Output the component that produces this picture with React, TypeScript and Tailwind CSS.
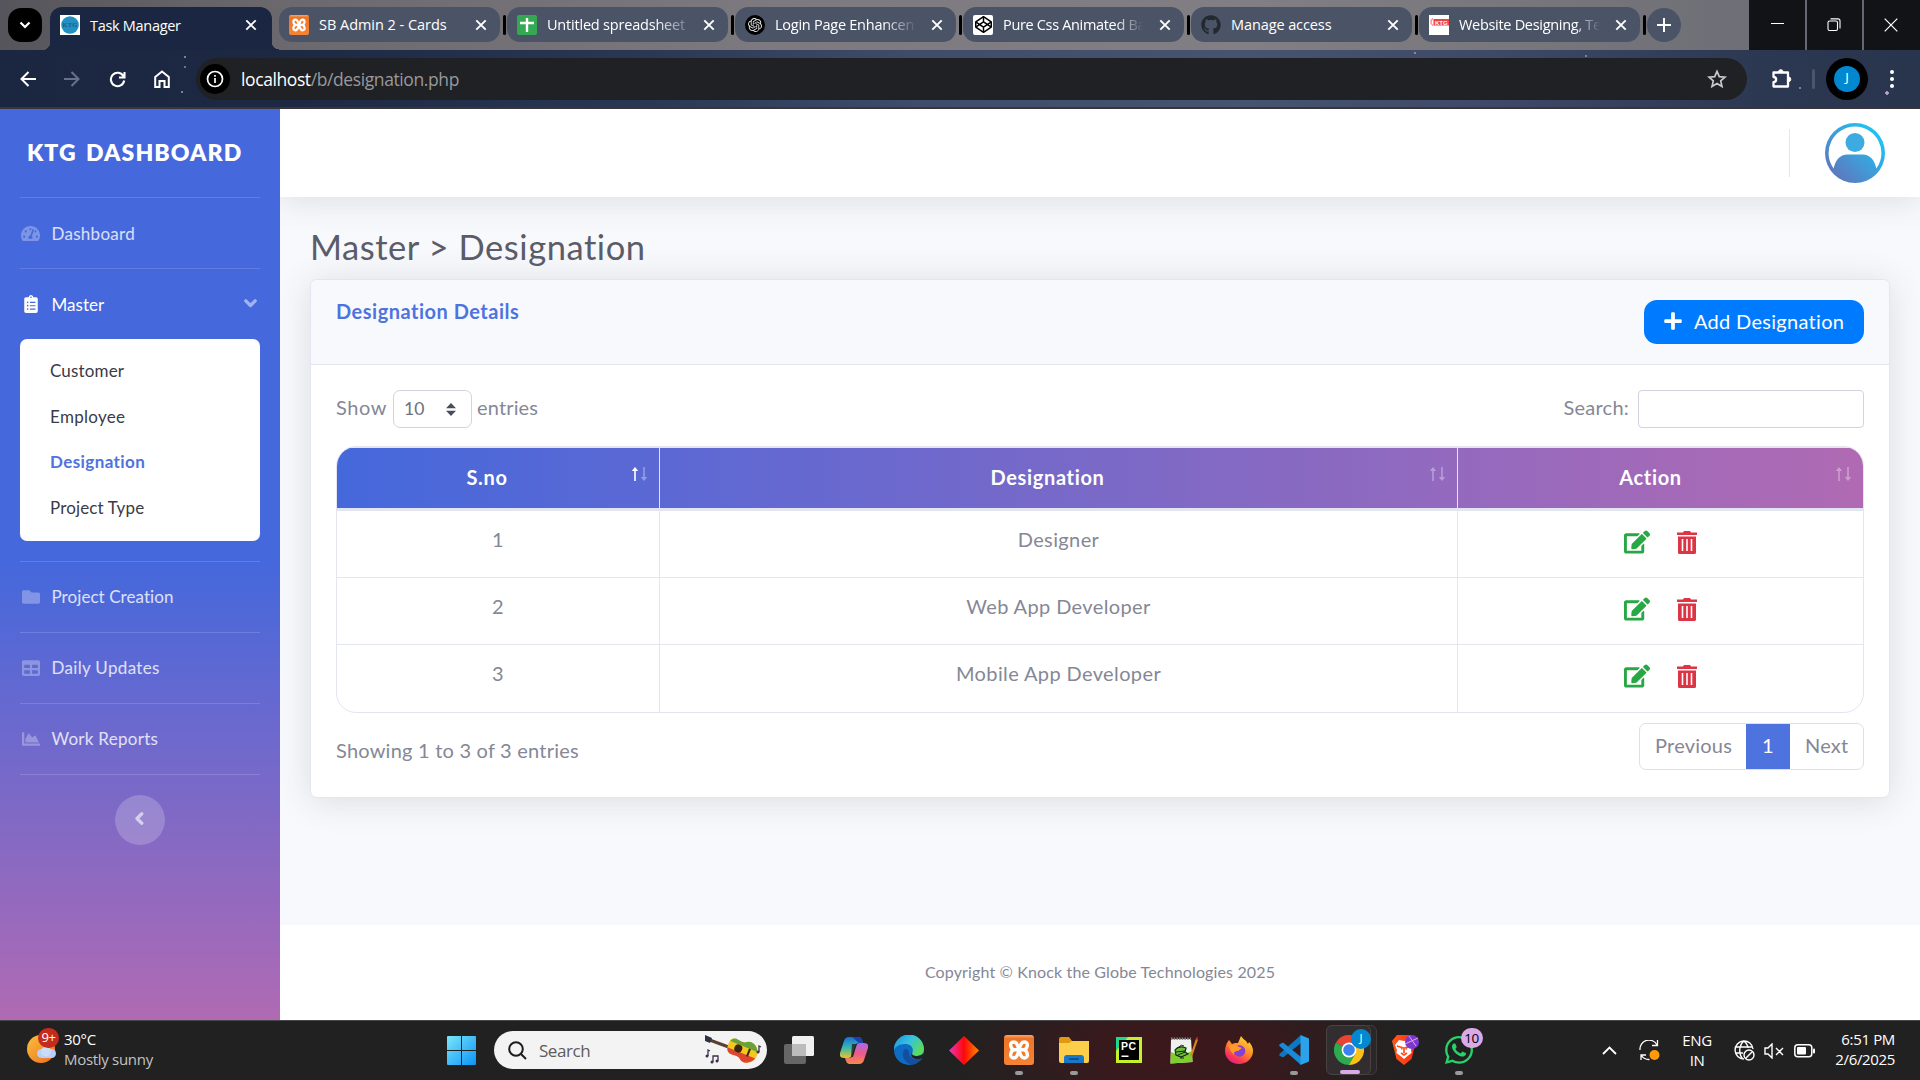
import React from "react";
import { FaTachometerAlt, FaClipboardList, FaFolder, FaTable, FaChartArea, FaPlus, FaEdit, FaWhatsapp, FaGithub, FaCodepen } from "react-icons/fa";
import { SiOpenai } from "react-icons/si";

const Close = ({ className = "" }: { className?: string }) => (
  <svg className={"shrink-0 " + className} width="12" height="12" viewBox="0 0 12 12" stroke="#fff" strokeWidth="1.9">
    <path d="M1.3 1.3 10.7 10.7M10.7 1.3 1.3 10.7" />
  </svg>
);

const Xampp = ({ size }: { size: number }) => (
  <svg className="shrink-0" width={size} height={size} viewBox="0 0 30 30">
    <defs><linearGradient id="xp" x1="0" y1="0" x2="0" y2="1"><stop stopColor="#f9a96c" /><stop offset=".12" stopColor="#ee7426" /><stop offset="1" stopColor="#f58434" /></linearGradient></defs>
    <rect width="30" height="30" rx="3" fill="url(#xp)" />
    <path d="M10 14.800H20M10.500 14.800C6.500 14.500 4.800 7 9.500 7 13 7 13.500 10 15 14.800 16.500 10 17 7 20.500 7c4.700 0 3 7.500-1 7.800 4 .3 5.700 8.200 1 8.200-3.500 0-4-3.200-5.500-8.200-1.500 5-2 8.200-5.500 8.200-4.700 0-3-7.900 1-8.200Z" fill="none" stroke="#fff" strokeWidth="3.400" strokeLinejoin="round" />
  </svg>
);

const favicons: Record<string, React.ReactNode> = {
  ktg: (
    <svg width="20" height="20" viewBox="0 0 20 20">
      <rect width="20" height="20" fill="#fff" />
      <circle cx="10" cy="10" r="8.8" fill="#2390c4" />
      <text x="10" y="12.4" fontSize="6.8" textAnchor="middle" fill="#1f5f80" fontFamily="Liberation Serif" fontWeight="700">KTG</text>
    </svg>
  ),
  xampp: <Xampp size={20} />,
  sheet: (
    <svg width="20" height="20" viewBox="0 0 20 20">
      <rect width="20" height="20" rx="2" fill="#34a853" />
      <path d="M10 3v14M3 8h14" stroke="#fff" strokeWidth="2.4" />
    </svg>
  ),
  openai: (
    <span className="flex h-5 w-5 items-center justify-center rounded-full bg-black"><SiOpenai size={14} color="#e8e8e8" /></span>
  ),
  codepen: (
    <span className="flex h-5 w-5 items-center justify-center rounded-[2px] bg-white"><FaCodepen size={17} color="#000" /></span>
  ),
  github: <FaGithub size={20} color="#24292f" />,
  web: (
    <svg width="20" height="20" viewBox="0 0 20 20">
      <rect width="20" height="20" fill="#fff" />
      <path d="M4 3.500a4 4 0 0 0 0 7" fill="none" stroke="#f99" strokeWidth="1.6" />
      <rect x="4.500" y="4" width="15.500" height="6.500" fill="#f04444" />
      <text x="12.300" y="9.500" fontSize="6" textAnchor="middle" fill="#fff" fontFamily="Liberation Sans" fontWeight="700">KTG</text>
    </svg>
  ),
};

const tabs = [
  { icon: "xampp", title: "SB Admin 2 - Cards", cls: "tracking-[-0.03px]" },
  { icon: "sheet", title: "Untitled spreadsheet", cls: "tracking-[-0.2px] [mask-image:linear-gradient(90deg,#000_108px,rgba(0,0,0,0.25)_139px)]" },
  { icon: "openai", title: "Login Page Enhancen", cls: "tracking-[-0.25px] [mask-image:linear-gradient(90deg,#000_108px,transparent_142px)]" },
  { icon: "codepen", title: "Pure Css Animated Ba", cls: "tracking-[-0.33px] [mask-image:linear-gradient(90deg,#000_112px,transparent_140px)]" },
  { icon: "github", title: "Manage access", cls: "tracking-[-0.1px]" },
  { icon: "web", title: "Website Designing, Te", cls: "tracking-[-0.3px] [mask-image:linear-gradient(90deg,#000_116px,transparent_141px)]" },
];

const TabStrip = () => (
  <div className="flex h-[50px] bg-[linear-gradient(90deg,#56555b_0%,#6c696e_15%,#7c7a7e_40%,#817f83_65%,#77767b_80%,#6d6e76_92%)]">
    <div className="ml-2 mt-2 flex h-[34px] w-[34px] items-center justify-center rounded-[13px] bg-black">
      <svg width="12" height="8" viewBox="0 0 12 8" fill="none" stroke="#fff" strokeWidth="2.2"><path d="M1.5 1.5 6 6l4.500-4.500" /></svg>
    </div>
    <div className="flex items-end">
      <div className="h-2 w-2 bg-[radial-gradient(circle_at_0_0,transparent_8px,#1b2740_8.500px)]" />
      <div className="flex h-[43px] w-[222px] items-center rounded-t-[12px] bg-[#1b2742] pb-[7px] pl-[10px] pr-[15px]">
        {favicons.ktg}
        <span className="ml-[10px] flex-1 whitespace-nowrap pt-px tracking-[-0.3px]">Task Manager</span>
        <Close />
      </div>
      <div className="h-2 w-[7px] bg-[radial-gradient(circle_at_100%_0,transparent_7px,#1b2740_7.500px)]" />
    </div>
    {tabs.map((t) => (
      <div key={t.title} className="flex w-[228px] shrink-0 pt-[7px]">
        <div className="flex h-[35px] w-[220.500px] items-center rounded-[13px] bg-[#4b5467] pl-[10px] pr-[13px]">
          <span className="flex h-5 w-5 shrink-0 items-center">{favicons[t.icon]}</span>
          <span className={"ml-[10px] w-[146px] whitespace-nowrap pt-px " + t.cls}>{t.title}</span>
          <Close className="ml-auto" />
        </div>
        <div className="ml-[3px] mt-2 h-5 w-[3px] rounded bg-black" />
      </div>
    ))}
    <div className="mt-2 flex h-[34px] w-[34px] items-center justify-center rounded-full bg-[#4b5467]">
      <svg width="14" height="14" stroke="#fff" strokeWidth="2"><path d="M7 0v14M0 7h14" /></svg>
    </div>
    <div className="ml-auto flex w-[171px] gap-[2px] bg-[#656773]">
      <div className="flex w-[56px] items-center justify-center bg-[#121316]"><div className="-mt-[3px] h-px w-[13px] bg-white" /></div>
      <div className="flex w-[55px] items-center justify-center bg-[#121316] pr-[2px]">
        <svg width="14" height="14" fill="none" stroke="#fff" strokeWidth="1.1"><rect x="1" y="3" width="9.500" height="9.500" rx="1.500" /><path d="M3.500 .9h7.500a2 2 0 0 1 2 2v7.500" /></svg>
      </div>
      <div className="flex flex-1 items-center justify-center bg-[#121316] pr-[2px]">
        <svg width="14" height="14" stroke="#fff" strokeWidth="1.200"><path d="M.7.7l12.600 12.600M13.300.7.7 13.300" /></svg>
      </div>
    </div>
  </div>
);

const Toolbar = () => (
  <div className="flex h-[59px] items-center border-b-2 border-[#3a3538] bg-[radial-gradient(circle_at_185px_7px,#78839b_1px,transparent_1.500px),radial-gradient(circle_at_185px_17px,#68738b_1px,transparent_1.500px),radial-gradient(circle_at_182px_42px,#78839b_1px,transparent_1.500px),radial-gradient(circle_at_1415px_3px,#98839b_1px,transparent_1.500px),radial-gradient(circle_at_1586px_6px,#78839b_1px,transparent_1.500px),radial-gradient(circle_at_1800px_38px,#78839b_1px,transparent_1.500px),radial-gradient(circle_at_1887px_43px,#b8a3cb_1.500px,transparent_2px),linear-gradient(90deg,#1b2740_0%,#1d2943_15%,#2a3753_33%,#3f4d6b_48%,#47546f_65%,#3d4967_78%,#2c3751_92%,#29344d_100%)] pt-px">
    <svg className="ml-5" width="16" height="16" fill="none" stroke="#fff" strokeWidth="2"><path d="M16 8H1.500M8.500 1 1.500 8l7 7" /></svg>
    <svg className="ml-[28px]" width="16" height="16" fill="none" stroke="#68718a" strokeWidth="2"><path d="M0 8h14.500M7.500 1l7 7-7 7" /></svg>
    <svg className="ml-[29px]" width="17" height="17" fill="none" stroke="#fff" strokeWidth="2.100"><path d="M14.500 5.300A6.700 6.700 0 1 0 15.200 9.500M15.500 1v5.500H10" /></svg>
    <svg className="ml-[28px]" width="16" height="18" fill="none" stroke="#fff" strokeWidth="2"><path d="M1.200 7 8 1.500 14.800 7v10H10.500v-6h-5v6H1.200Z" /></svg>
    <div className="ml-[26px] flex h-[42px] w-[1551px] shrink-0 items-center rounded-full bg-[#202124] pl-[4px] pr-[20px]">
      <div className="flex h-[30px] w-[30px] items-center justify-center rounded-full bg-black">
        <svg width="18" height="18" fill="none" stroke="#fff" strokeWidth="1.700"><circle cx="9" cy="9" r="7.500" /><path d="M9 8v5M9 5v1.800" /></svg>
      </div>
      <span className="ml-[11px] pt-px text-[17.500px] tracking-[-0.4px] text-white">localhost<span className="text-[#98999c]">/b/designation.php</span></span>
      <svg className="ml-auto" width="20" height="20" viewBox="0 0 20 20" fill="none" stroke="#c7c8ca" strokeWidth="1.700"><path d="m10 2.300 2.300 5.300 5.700.5-4.300 3.800 1.300 5.700-5-3-5 3 1.300-5.700L2 8.100l5.700-.5Z" /></svg>
    </div>
    <svg className="ml-[24px]" width="22" height="22" viewBox="0 0 22 22"><path d="M2.500 4.500h14.500v14H2.500v-4.300a2.600 2.600 0 0 0 0-5.200Z" fill="none" stroke="#fff" strokeWidth="2.300" strokeLinejoin="round" /><path d="M7.500 4a2.300 2.300 0 0 1 4.600 0M17.500 9a2.300 2.300 0 0 1 0 4.600" fill="#fff" stroke="#fff" /></svg>
    <div className="ml-[19px] h-5 w-[3px] rounded bg-[#4a5570]" />
    <div className="ml-[11px] flex h-[42px] w-[42px] items-center justify-center rounded-full bg-black">
      <div className="flex h-[26px] w-[26px] items-center justify-center rounded-full bg-[#0288d1] font-['Noto_Sans'] text-[13px] text-white"><span className="-mt-[3px]">J</span></div>
    </div>
    <svg className="ml-[21px]" width="6" height="20" fill="#fff"><circle cx="3" cy="3" r="2" /><circle cx="3" cy="10" r="2" /><circle cx="3" cy="17" r="2" /></svg>
  </div>
);

const Divider = () => <div className="mx-5 h-px shrink-0 bg-white/15" />;

const NavItem = ({ icon, label, active, cls = "" }: { icon: React.ReactNode; label: string; active?: boolean; cls?: string }) => (
  <div className={"flex h-[70px] items-center pl-5 pr-[23px] text-[17px] " + (active ? "text-white" : "text-white/80")}>
    <span className={"flex w-[21px] shrink-0 justify-center " + (active ? "" : "text-white/30")}>{icon}</span>
    <span className={"ml-[10.500px] flex-1 whitespace-nowrap " + cls}>{label}</span>
    {active && (
      <svg className="-mt-px opacity-50" width="13" height="9" fill="none" stroke="#fff" strokeWidth="3.300" strokeLinecap="round" strokeLinejoin="round"><path d="m1.800 1.800 4.700 4.700 4.700-4.700" /></svg>
    )}
  </div>
);

const Sidebar = () => (
  <aside className="relative z-20 flex w-[280px] flex-col bg-[linear-gradient(180deg,#4568dc_50%,#b06ab3_100%)]">
    <div className="flex h-[88px] items-center whitespace-nowrap pb-[2px] pl-[27px] text-[23px] font-extrabold tracking-[1.08px] text-white [word-spacing:3px]">KTG DASHBOARD</div>
    <Divider />
    <NavItem icon={<FaTachometerAlt size={19} />} label="Dashboard" cls="pt-px tracking-[0.28px]" />
    <Divider />
    <NavItem icon={<FaClipboardList size={18} />} label="Master" active cls="pt-px tracking-[0.05px]" />
    <div className="mx-5 flex h-[202px] shrink-0 flex-col rounded-[7px] bg-white pl-[30px] pt-[9px] text-[17px] text-[#3a3b45]">
      <div className="flex h-[45.500px] items-center tracking-[0.15px]">Customer</div>
      <div className="flex h-[45.500px] items-center tracking-[0.3px]">Employee</div>
      <div className="flex h-[45.500px] items-center font-bold tracking-[0.4px] text-[#4e73df]">Designation</div>
      <div className="flex h-[45.500px] items-center tracking-[0.15px]">Project Type</div>
    </div>
    <div className="h-5 shrink-0" />
    <Divider />
    <NavItem icon={<FaFolder size={18} />} label="Project Creation" cls="tracking-[0.07px]" />
    <Divider />
    <NavItem icon={<FaTable size={18} />} label="Daily Updates" cls="tracking-[0.32px]" />
    <Divider />
    <NavItem icon={<FaChartArea size={18} />} label="Work Reports" cls="tracking-[0.28px]" />
    <Divider />
    <div className="mt-5 flex h-[50px] w-[50px] items-center justify-center self-center rounded-full bg-white/20">
      <svg className="-mt-[3px] mr-[2px] opacity-60" width="9" height="13" fill="none" stroke="#fff" strokeWidth="3.300" strokeLinecap="round" strokeLinejoin="round"><path d="M6.800 1.800 2 6.500l4.800 4.700" /></svg>
    </div>
  </aside>
);

const Sort = ({ up }: { up?: boolean }) => (
  <svg className="absolute right-[11px] top-[19px]" width="18" height="14" fill="none" stroke="#fff" strokeWidth="1.600">
    <g opacity={up ? 1 : 0.35}><path d="M5 14V2" /><path d="M5 0 8.200 4H1.800Z" fill="#fff" stroke="none" /></g>
    <g opacity="0.35"><path d="M14 0v12" /><path d="M14 14l3.200-4h-6.400Z" fill="#fff" stroke="none" /></g>
  </svg>
);

const Trash = () => (
  <svg width="20" height="23" viewBox="0 0 20 23">
    <path fill="#dc3545" fillRule="evenodd" d="M0 1.500h6L7 0h6l1 1.500h6V4H0ZM1 5.500h18V21.500Q19 23 17.500 23H2.500Q1 23 1 21.500ZM4.700 8v12h1.600V8ZM9.200 8v12h1.600V8ZM13.700 8v12h1.600V8Z" />
  </svg>
);

const rows = [
  { n: "1", name: "Designer", h: "h-[66px]" },
  { n: "2", name: "Web App Developer", h: "h-[67px]" },
  { n: "3", name: "Mobile App Developer", h: "h-[68px]" },
];

const Main = () => (
  <main className="flex flex-1 flex-col bg-[#f8f9fc] text-[#858796]">
    <div className="z-10 flex h-[88px] shrink-0 items-center justify-end bg-white pr-[35px] shadow-[0_3px_35px_0_rgba(58,59,69,0.15)]">
      <div className="h-[48px] w-px bg-[#e3e6f0]" />
      <svg className="ml-[35px]" width="60" height="60" viewBox="0 0 60 60">
        <defs>
          <linearGradient id="av" x1="0" y1="1" x2="1" y2="0"><stop offset="0.1" stopColor="#6274ba" /><stop offset="0.9" stopColor="#19c8f8" /></linearGradient>
        </defs>
        <path fill="url(#av)" fillRule="evenodd" d="M30 0a30 30 0 1 0 0 60 30 30 0 0 0 0-60ZM30 3.500a26.500 26.500 0 0 1 21.400 42C49.500 37 45 31.500 37.500 31.500h-15C15 31.500 10.500 37 8.600 45.500A26.500 26.500 0 0 1 30 3.500Z" />
        <circle cx="30" cy="19.500" r="9.500" fill="#3cabe2" />
      </svg>
    </div>
    <div className="px-[30px] pt-[29px]">
      <h1 className="h-[53px] whitespace-nowrap text-[34.500px] leading-[41px] tracking-[0.55px] text-[#5a5c69]">Master &gt; Designation</h1>
      <section className="h-[519px] rounded-[7px] border border-[#e3e6f0] bg-white text-[20px] tracking-[0.22px] shadow-[0_3px_35px_0_rgba(58,59,69,0.15)]">
        <header className="flex h-[85px] justify-between rounded-t-[7px] border-b border-[#e3e6f0] bg-[#f8f9fc] pl-[25px] pr-[25px]">
          <h6 className="pt-[19px] font-bold leading-6 tracking-[0.5px] text-[#4e73df]">Designation Details</h6>
          <button className="mt-5 flex h-[44px] w-[220px] items-center rounded-[13px] bg-[#007bff] pb-[3px] pl-[19px] text-white">
            <FaPlus size={20} />
            <span className="ml-[11px] whitespace-nowrap tracking-[0.3px]">Add Designation</span>
          </button>
        </header>
        <div className="px-[25px]">
          <div className="flex h-[81px] items-start justify-between pt-[25px]">
            <div className="flex items-start whitespace-nowrap">
              <span className="w-[57px] leading-[34px] tracking-[0.6px]">Show</span>
              <div className="flex h-[38px] w-[79px] items-center rounded-[7px] border border-[#d1d3e2] pl-[10px] pr-[15px] text-[17.500px] text-[#6e707e]">
                10
                <svg className="ml-auto" width="10" height="13" fill="#4a4c58"><path d="M5 0l5 5.300H0ZM5 13l5-5.300H0Z" /></svg>
              </div>
              <span className="ml-[5px] leading-[34px] tracking-[0.15px]">entries</span>
            </div>
            <div className="flex items-start">
              <span className="mr-[9px] leading-[35px]">Search:</span>
              <div className="h-[38px] w-[226px] rounded-[4px] border border-[#d1d3e2] bg-white" />
            </div>
          </div>
          <div className="overflow-hidden rounded-[20px] border border-[#e3e6f0]">
            <div className="grid h-[64px] grid-cols-[323px_798px_1fr] border-b-[3px] border-t border-[#e3e6f0] bg-[linear-gradient(90deg,#4568dc,#b06ab3)] bg-origin-border text-center font-bold leading-[58px] tracking-[0.65px] text-white">
              <div className="relative border-r border-[#e3e6f0] pr-[22px]">S.no<Sort up /></div>
              <div className="relative border-r border-[#e3e6f0] pr-[22px]">Designation<Sort /></div>
              <div className="relative pr-5">Action<Sort /></div>
            </div>
            {rows.map((r, i) => (
              <div key={r.n} className={"grid grid-cols-[323px_798px_1fr] text-center leading-[57px] tracking-[0.38px] " + r.h + (i ? " border-t border-[#e3e6f0]" : "")}>
                <div className="border-r border-[#e3e6f0]">{r.n}</div>
                <div className="border-r border-[#e3e6f0]">{r.name}</div>
                <div className="flex justify-center gap-[27px] pt-[20px]">
                  <FaEdit size={26} color="#28a745" className="-mt-[2px]" />
                  <Trash />
                </div>
              </div>
            ))}
          </div>
          <div className="flex justify-between pt-[10px]">
            <span className="pt-[15px] leading-6">Showing 1 to 3 of 3 entries</span>
            <div className="flex h-[47px] w-[225px] overflow-hidden rounded-[7px] border border-[#dddfeb] leading-[43px]">
              <span className="w-[106px] pl-[15px]">Previous</span>
              <span className="-my-px w-[44px] bg-[#4e73df] text-center leading-[45px] text-white">1</span>
              <span className="flex-1 pl-[15px]">Next</span>
            </div>
          </div>
        </div>
      </section>
    </div>
    <footer className="mt-auto flex h-[95px] items-center justify-center bg-white pb-px text-[16px] tracking-[0.14px]">Copyright © Knock the Globe Technologies 2025</footer>
  </main>
);

const apps: { name: string; node: React.ReactNode; dot?: boolean }[] = [
  { name: "taskview", node: <svg width="30" height="28"><rect y="8" width="22" height="20" rx="2" fill="#666" /><rect x="8" width="22" height="20" rx="1.500" fill="#f0f0f0" /><rect x="8" y="8" width="14" height="12" fill="#bcbcbc" /></svg> },
  { name: "copilot", node: (
    <svg width="28" height="27" viewBox="0 0 28 27">
      <defs>
        <linearGradient id="cp1" x1="0" y1="0" x2="0" y2="1"><stop stopColor="#1b6fd8" /><stop offset=".5" stopColor="#35b8b0" /><stop offset="1" stopColor="#e8c52a" /></linearGradient>
        <linearGradient id="cp2" x1="0" y1="0" x2="0" y2="1"><stop stopColor="#a66be8" /><stop offset=".5" stopColor="#ee5a8a" /><stop offset="1" stopColor="#f78b4a" /></linearGradient>
      </defs>
      <path d="M9 0h10q2 0 3 3l1 3h-4q-3 0-4 3l-3 9q-1 3-4 3H4q-5 0-4-5L4 4Q5 0 9 0Z" fill="url(#cp1)" />
      <path d="M19 27H9q-2 0-3-3l-1-3h4q3 0 4-3l3-9q1-3 4-3h4q5 0 4 5l-4 12q-1 4-5 4Z" fill="url(#cp2)" />
      <path d="M12 7h5l-4 13h-2Z" fill="#222" opacity=".8" />
      <path d="M12 0h7q2 0 3 3l1 3h-4Z" fill="#1d3fb0" />
    </svg>
  ) },
  { name: "edge", node: (
    <svg width="30" height="30" viewBox="0 0 30 30">
      <defs><linearGradient id="ed" x1="0" y1="0" x2="1" y2=".6"><stop stopColor="#1b8fe0" /><stop offset=".5" stopColor="#35c1e0" /><stop offset="1" stopColor="#5bdc5b" /></linearGradient></defs>
      <circle cx="15" cy="15" r="15" fill="#0f6cc4" />
      <path d="M0 15A15 15 0 0 1 30 14c0 5-4 7-8 7-4-.5-4.500-2-3.500-3.500C20 13 17 9 11 9 5 9 1 12 0 15Z" fill="url(#ed)" />
      <path d="M11 14c-5 5-1 13 6 15.800 5 0 9-3 11.500-6.800C22 26.500 14 23 15 17c-1.500-3-3-3.500-4-3Z" fill="#134f9c" />
      <path d="M29.500 18c-1.500 2.500-4.500 3.200-7.500 3-4-.5-4.500-2-3.500-3.500-1.200 1-1.800 3.500.5 5.300 3 2 7 1.500 9.500 0Z" fill="#222" />
    </svg>
  ) },
  { name: "diamond", node: <svg width="30" height="29"><defs><linearGradient id="dm"><stop stopColor="#f030c0" /><stop offset=".5" stopColor="#fd0808" /><stop offset="1" stopColor="#ff8a00" /></linearGradient></defs><path d="M15 0 30 14.500 15 29 0 14.500Z" fill="url(#dm)" /></svg> },
  { name: "xampp", node: <Xampp size={30} />, dot: true },
  { name: "explorer", node: <svg width="30" height="27"><path d="M0 2q0-2 2-2h8l3 4h15q2 0 2 2v6H0Z" fill="#e09a10" /><path d="M0 6h10l3-2h17v20q0 2-2 2H2q-2 0-2-2Z" fill="#fdce4a" /><path d="M5 26v-5q0-3 3-3h14q3 0 3 3v5Z" fill="#1777c8" /><rect x="10" y="21" width="10" height="2" rx="1" fill="#0c4f95" /></svg>, dot: true },
  { name: "pycharm", node: <svg width="26" height="26"><rect width="26" height="26" fill="#c8ef2c" /><path d="M0 0h12L0 14Z" fill="#21d789" /><rect x="3" y="3" width="20" height="20" fill="#000" /><text x="5" y="13" fontSize="10.500" fontWeight="700" fill="#fff" fontFamily="Liberation Sans" textLength="15">PC</text><rect x="5.500" y="18.500" width="7" height="1.500" fill="#fff" /></svg> },
  { name: "notepad", node: (
    <svg width="28" height="27">
      <path d="M1 2h20l1.500 23-22 1.500Z" fill="#eef1ee" />
      <path d="M1 15q10 5 21-1l.5 11-22 1.500Z" fill="#7fcf2c" />
      <path d="M5 13q4-5 11-2l-1 4 3 2-7 3-5-2Z" fill="#6cbf2e" stroke="#13281a" strokeWidth="1.200" />
      <path d="M9 10q2-3 5-1M6 15l9-1M8 18l7-3M10 21h4" fill="none" stroke="#13281a" strokeWidth="1" />
      <path d="M1 1.800h20" stroke="#888" strokeWidth="2.500" strokeDasharray="1.500 1.200" />
      <path d="M27 2 21 19.500" stroke="#d98a1f" strokeWidth="2.200" /><path d="M27.500 0 26.800 2.500" stroke="#a22" strokeWidth="2.200" />
    </svg>
  ) },
  { name: "firefox", node: (
    <svg width="28" height="28" viewBox="0 0 28 28">
      <defs><linearGradient id="ff" x1=".8" y1="0" x2=".2" y2="1"><stop stopColor="#ffdf3a" /><stop offset=".45" stopColor="#ff8a26" /><stop offset=".8" stopColor="#f8315a" /><stop offset="1" stopColor="#d8209a" /></linearGradient></defs>
      <path d="M4 4l3 4 3-1 3 0 3-7q2 3 5 5l2 3 1-2q4 4 4 9a14 13 0 0 1-28 0Q0 9 4 4Z" fill="url(#ff)" />
      <circle cx="14.500" cy="15" r="5.800" fill="#8440d8" /><path d="M3 9q7-1 9 1l5 2-4 3q-5 0-4 4-4-4-6-10Z" fill="#ff9a2a" />
    </svg>
  ) },
  { name: "vscode", node: (
    <svg width="30" height="30" viewBox="0 0 30 30"><path d="M22 0v8L4 22.500 1 21q-1.500-1 0-2.500Z" fill="#0a78c2" /><path d="M22 30v-8L4 7.500 1 9q-1.500 1 0 2.500Z" fill="#1b8ad6" /><path d="M21.500 0 30 3.500v23L21.500 30Z" fill="#2aa3ea" /></svg>
  ), dot: true },
  { name: "chrome", node: null },
  { name: "brave", node: (
    <span className="relative">
      <svg width="26" height="30" viewBox="0 0 26 30">
        <defs><linearGradient id="br"><stop stopColor="#ff5a1f" /><stop offset="1" stopColor="#ff2a10" /></linearGradient></defs>
        <path d="M6 0h14l5 6-1 4-3.500 14L13 30 5.500 24 2 10 1 6Z" fill="url(#br)" />
        <path d="M8 5 13 6l5-1 4 5-2 5 .5 3-4 3L13 24l-3.500-3-4-3 .5-3L4 10Z" fill="#fff" />
        <path d="M6 11l5 1.500-.500 2M20 11l-5 1.500.5 2M13 12v6M10 18l3 2 3-2" fill="none" stroke="#ff4a1a" strokeWidth="1.700" />
      </svg>
      <svg className="absolute -right-[2px] top-0" width="14" height="14"><circle cx="7" cy="7" r="7" fill="#7a3ad0" /><path d="M0 9 13 3M4 1l7 10" stroke="#f0a0e0" fill="none" /></svg>
    </span>
  ) },
  { name: "whatsapp", node: (
    <span className="relative"><FaWhatsapp size={32} color="#25d366" /><span className="absolute -right-[8px] -top-[6px] flex h-[20px] w-[22px] items-center justify-center rounded-full bg-[#d9a9e8] text-[13.500px] tracking-[-0.5px] text-black">10</span></span>
  ), dot: true },
];

const Chrome = () => (
  <svg width="30" height="30" viewBox="0 0 30 30">
    <path d="M15 15 2 7.500A15 15 0 0 1 28 7.500Z" fill="#ea4335" />
    <path d="M15 15 21.500 7.500H28A15 15 0 0 1 15 30Z" fill="#fbc116" />
    <path d="M15 15 2 7.500A15 15 0 0 0 15 30l6.500-11.300Z" fill="#2da94f" />
    <circle cx="15" cy="15" r="7.400" fill="#fff" /><circle cx="15" cy="15" r="5.800" fill="#3b82f0" />
  </svg>
);

const Taskbar = () => (
  <div className="flex h-[60px] border-t border-[#454749] bg-[radial-gradient(ellipse_230px_90px_at_1180px_30px,#3d171b_0%,#371a1d_40%,#212121_100%)] text-white">
    <div className="flex w-[447px] pl-[27px] pt-[10px]">
      <div className="relative h-[42px] w-[37px]">
        <div className="absolute left-0 top-[4px] h-[28px] w-[28px] rounded-full bg-gradient-to-br from-[#f8c040] to-[#ec6a18]" />
        <svg className="absolute left-[10px] top-[15px]" width="20" height="12"><rect y="3" width="19" height="9" rx="4.500" fill="#b8d0f5" /><circle cx="9" cy="5.500" r="5" fill="#c9dcf9" /></svg>
        <div className="absolute -top-[3px] left-[11px] flex h-[20px] w-[21px] items-center justify-center rounded-full bg-[#c42b1c] text-[13px] tracking-[-0.500px]">9+</div>
      </div>
      <div className="text-[15px] leading-5 tracking-[-0.3px]"><div className="-mt-[2px]">30°C</div><div className="text-[#c3c3c3]">Mostly sunny</div></div>
    </div>
    <svg className="mt-[15px]" width="29" height="29"><defs><linearGradient id="wn" x1="0" y1="0" x2="1" y2="1"><stop stopColor="#7be6fb" /><stop offset="1" stopColor="#0a94f5" /></linearGradient></defs><path d="M0 1q0-1 1-1h13v14H0ZM15 0h13q1 0 1 1v13H15ZM0 15h14v14H1q-1 0-1-1ZM15 15h14v13q0 1-1 1H15Z" fill="url(#wn)" /></svg>
    <div className="ml-[18px] mt-[10px] flex h-[38px] w-[273px] items-center rounded-full bg-[#f3f3f3] pl-[14px] pr-[5px]">
      <svg width="19" height="19" fill="none" stroke="#1d1d1d" strokeWidth="2"><circle cx="8" cy="8" r="6.800" /><path d="m13 13 5 5" /></svg>
      <span className="ml-[12px] pt-px text-[17px] tracking-[-0.45px] text-[#5c5c5c]">Search</span>
      <svg className="ml-auto" width="58" height="30" viewBox="0 0 58 30">
        <path d="M3 4 30 14" stroke="#5b4030" strokeWidth="3" /><path d="M1 0 8 3 6 8 1 6Z" fill="#2d3340" />
        <g transform="rotate(22 38 15)">
          <path d="M23 14q0-8 8-7 4 1 7 0 4-4 9-2 7 3 7 10t-7 10q-5 2-9-2-3-1-7 0-8 1-8-9Z" fill="#f2c81e" />
          <path d="M24 10q2-4 7-3 4 1 7 0 4-4 9-2 4 1.500 6 6H24Z" fill="#6aa23a" />
          <path d="M23.500 18H53.500q-2 5-6.500 7-5 2-9-2-3-1-7 0-6 1-7.500-5Z" fill="#df4430" />
          <circle cx="34" cy="15" r="4" fill="#3a2412" /><path d="M45 11v8" stroke="#3a2412" strokeWidth="2" />
        </g>
        <path d="M4 21v-6l2 1M9 27v-6h5v5M55 17v-6l2 1" fill="none" stroke="#3d3048" strokeWidth="1.300" /><g fill="#3d3048"><circle cx="3" cy="21" r="1.500" /><circle cx="8" cy="27" r="1.500" /><circle cx="13" cy="26" r="1.500" /><circle cx="54" cy="17" r="1.500" /></g>
      </svg>
    </div>
    <div className="ml-[4px] flex">
      {apps.map((a) => (
        <div key={a.name} className="relative flex w-[55px] items-center justify-center pb-px">
          {a.name === "chrome" ? (
            <div className="relative left-[3px] flex h-[50px] w-[51px] pr-[6px]">
              <div className="absolute right-0 top-0 h-[50px] w-[14px] rounded-[6px] border border-[#3f3a3c] bg-[#2a2729]" />
              <div className="relative flex h-[50px] w-[45px] items-center justify-center rounded-[6px] border border-[#4a4343] bg-[#322e30]">
                <Chrome />
                <span className="absolute -right-px top-[3px] flex h-[20px] w-[20px] items-center justify-center rounded-full bg-[#0288d1] font-['Noto_Sans'] text-[11px]"><span className="-mt-[2px]">J</span></span>
                <div className="absolute bottom-0 left-[13px] h-1 w-[20px] rounded-full bg-[#d9a9e8]" />
              </div>
            </div>
          ) : a.node}
          {a.dot && <div className="absolute bottom-[5px] h-1 w-2 rounded-full bg-[#9a9a9a]" />}
        </div>
      ))}
    </div>
    <div className="ml-auto flex items-center pr-[25px] text-[15px] leading-5">
      <svg width="15" height="9" fill="none" stroke="#fff" strokeWidth="1.800"><path d="m1 8 6.500-6.500L14 8" /></svg>
      <svg className="ml-[22px]" width="21" height="21" fill="none" stroke="#fff" strokeWidth="1.300"><path d="M1 10A9 9 0 0 1 18 5M18.500 0v5.500H13M2 20v-5h5M2.500 15.500a9 9 0 0 0 8 4" /><circle cx="15.500" cy="15" r="5" fill="#ff9a0a" stroke="none" /></svg>
      <div className="-mt-[2px] ml-[21px] w-[32px] text-center tracking-[-0.4px]">ENG<br />IN</div>
      <svg className="ml-[21px]" width="21" height="21" fill="none" stroke="#fff" strokeWidth="1.400"><path d="M19 9A9 9 0 1 0 10 19M1.500 7h17M1.500 13H9M10 1C4 6 5 15 9 19M10 1c3 3 4 5 4 7" /><circle cx="15" cy="15" r="5" /><path d="m12 18 6-6" /></svg>
      <svg className="ml-[9px]" width="20" height="16" fill="none" stroke="#fff" strokeWidth="1.400"><path d="M1 5h3l4-4v14l-4-4H1ZM12 5l7 7M19 5l-7 7" /></svg>
      <svg className="ml-[10px]" width="21" height="14"><rect x=".8" y=".8" width="17" height="12" rx="3" fill="none" stroke="#fff" strokeWidth="1.500" /><rect x="3" y="3" width="9" height="7.600" rx="1" fill="#fff" /><rect x="19" y="4.500" width="2" height="5" rx="1" fill="#fff" /></svg>
      <div className="-mt-[3px] ml-[14px] w-[66px] whitespace-nowrap text-right tracking-[-0.35px]">6:51 PM<br />2/6/2025</div>
    </div>
  </div>
);

export default function App() {
  return (
    <div className="flex h-[1080px] w-[1920px] flex-col overflow-hidden font-['Open_Sans','Noto_Sans',sans-serif]">
      <div className="shrink-0 text-[14.500px] text-white"><TabStrip /><Toolbar /></div>
      <div className="flex h-[911px] shrink-0 overflow-hidden font-[Lato,'Open_Sans',sans-serif]"><Sidebar /><Main /></div>
      <Taskbar />
    </div>
  );
}
